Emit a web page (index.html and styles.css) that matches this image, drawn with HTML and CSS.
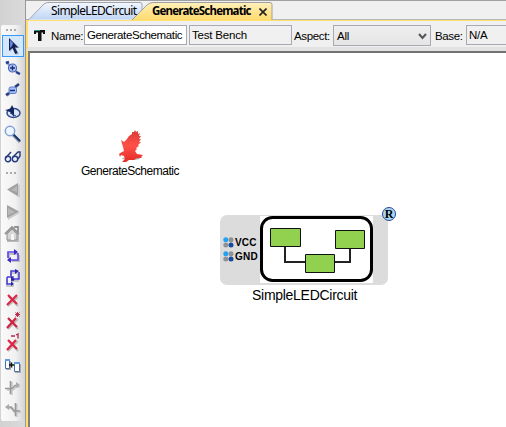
FILE: index.html
```html
<!DOCTYPE html>
<html lang="en">
<head>
<meta charset="utf-8">
<title>GenerateSchematic</title>
<link rel="stylesheet" href="styles.css">
</head>
<body>
<div class="app">
  <aside class="rail">
    <div class="tools">
      <div class="grip"><i></i><i></i><i></i></div>
      <div class="tool selected"><svg viewBox="0 0 20 22"><path d="M7 3v13l3-3 3 6 3-1-3-6h4z" fill="#8fa5c5" opacity=".6"/><path d="M6 2v13l3.500-3 2.700 6 2.500-1-2.800-5.500h3.500z" fill="#17204e"/><path d="M7 4v8l2-2 1-3z" fill="#6687e5"/></svg></div>
      <div class="tool"><svg viewBox="0 0 20 22"><path d="M3 5l13 12" stroke="#8495bf" stroke-width="2"/><path d="M3 6l3-1M13 15l4 2" fill="none" stroke="#273f91" stroke-width="2.500"/><circle cx="9.500" cy="11" r="4" fill="#bcd0fa" stroke="#4562b7" stroke-width="1.200"/><path d="M7 11h5M9.500 8.500v5" stroke="#172d80" stroke-width="1.500"/></svg></div>
      <div class="tool"><svg viewBox="0 0 20 22"><path d="M4 17L15 6" stroke="#8796b9" stroke-width="2"/><path d="M3 16l3-2M12 8l4-3" stroke="#293c7c" stroke-width="2.500"/><rect x="6" y="8" width="7.500" height="6.500" rx="2" fill="#a7c0f7" stroke="#5878c9"/><path d="M7 11.500h5" stroke="#132d83" stroke-width="1.500"/></svg></div>
      <div class="tool"><svg viewBox="0 0 20 22"><ellipse cx="10.500" cy="12" rx="6.500" ry="4.500" fill="#dce7fa" stroke="#334a91" stroke-width="1.500"/><path d="M2 9l5-1 2-4 2 4v8l-4-5z" fill="#14265f"/><path d="M7 12l6 3" stroke="#243e86"/></svg></div>
      <div class="tool"><svg viewBox="0 0 20 22"><path d="M10 12l7 7" stroke="#8c99ad" stroke-width="3"/><path d="M10 11l7 7" stroke="#19376c" stroke-width="2"/><circle cx="7" cy="8" r="4.700" fill="#eef7ff" stroke="#829fd4" stroke-width="1.500"/></svg></div>
      <div class="tool"><svg viewBox="0 0 20 22"><g fill="#e9f0ff" stroke="#253b79" stroke-width="1.400"><circle cx="5" cy="14" r="2.700"/><circle cx="12" cy="14" r="2.700"/><path d="M2.500 13L8 7M10 12l5-5 2 0v4l-2 3" fill="none"/></g></svg></div>
      <div class="grip second"><i></i><i></i><i></i></div>
      <div class="tool"><svg viewBox="0 0 20 22"><path d="M17 5v14L6 12z" fill="#ccc"/><path d="M15 4v13L4 10.500z" fill="#a0a0a0"/><path d="M14 7v6l-6-2z" fill="#b8b8b8"/></svg></div>
      <div class="tool"><svg viewBox="0 0 20 22"><path d="M5 6v13l12-7z" fill="#ccc"/><path d="M4 4v13l12-6.500z" fill="#a0a0a0"/><path d="M5 7v7l7-3z" fill="#b8b8b8"/></svg></div>
      <div class="tool"><svg viewBox="0 0 20 22"><path d="M4 11v8h12v-8" fill="#bbb"/><path d="M2 11l7-7 7 7M12 5V4h3v5" fill="none" stroke="#929292" stroke-width="1.800"/><path d="M4 11l5-5 5 5v6H4z" fill="#d5d5d5" stroke="#929292"/><path d="M8 11h3v6H8z" fill="#f5f5f5"/></svg></div>
      <div class="tool"><svg viewBox="0 0 20 22"><path d="M5 14V8h9M15 9v6H8" transform="translate(1 1)" fill="none" stroke="#bbb" stroke-width="2"/><path d="M5 13V7h8M15 8v7H8" fill="none" stroke="#5e4aec" stroke-width="1.700"/><path d="M11 4l4 3-4 3M8 12l-4 3 4 3" fill="#3d27c1"/></svg></div>
      <div class="tool"><svg viewBox="0 0 20 22"><path d="M3 11v7h7M7 9V5h7v8H8" transform="translate(1 1)" stroke="#bbb" stroke-width="1.500" fill="none"/><path d="M4 10v7h6M8 9V4h6M16 5v7h-5M4 10h6v4" fill="none" stroke="#4638da" stroke-width="1.500"/><path d="M12 2l4 2-4 3M8 9l4 4-4 1M8 14l3 3-3 2" fill="#2b269f"/></svg></div>
      <div class="tool"><svg viewBox="0 0 20 22"><path d="M6 8l9 9M15 8L5 17" stroke="#bbb" stroke-width="2"/><path d="M5 6l9 9M14 6L4 16" stroke="#dc2645" stroke-width="2.200"/></svg></div>
      <div class="tool"><svg viewBox="0 0 20 22"><path d="M6 8l9 10M15 8L5 18" stroke="#bbb" stroke-width="2"/><path d="M5 7l9 9M13 7L4 17" stroke="#cf2441" stroke-width="2.200"/><path d="M12 3.500h5M14.500 1v5M12.500 1.500l4 4M16.500 1.500l-4 4" stroke="#bd3150"/></svg></div>
      <div class="tool"><svg viewBox="0 0 20 22"><path d="M6 8l9 10M15 8L5 18" stroke="#bbb" stroke-width="2"/><path d="M5 7l9 9M13 7L4 17" stroke="#df2444" stroke-width="2.200"/><path d="M8 3h4M13 2l2-1v4.500" fill="none" stroke="#b52747" stroke-width="1.300"/></svg></div>
      <div class="tool"><svg viewBox="0 0 20 22"><path d="M3 6h5v9H3zM12 9h6v9h-6z" fill="#aaa"/><path d="M2.500 4.500h4v9h-4zM11.500 7.500h5v9h-5z" fill="#fff" stroke="#456ea2"/><path d="M2 5h5M11 8h6" stroke="#629cdc" stroke-width="2"/><path d="M6 10h5M8.500 7.500v5" stroke="#111" stroke-width="1.500"/></svg></div>
      <div class="tool"><svg viewBox="0 0 20 22"><path d="M8.500 5v13M4 12.500h6l3-3h4" fill="none" stroke="#ccc" stroke-width="2.500"/><path d="M7.500 4v13M2 11.500h7l3-3h4" fill="none" stroke="#9a9a9a" stroke-width="1.600"/><path d="M13 5l4 3-4 3" fill="#aaa"/></svg></div>
      <div class="tool"><svg viewBox="0 0 20 22"><path d="M13.500 5v13M5 9h4l3 4h6" fill="none" stroke="#ccc" stroke-width="2.500"/><path d="M12.500 4v13M3 8h5l3 4h6" fill="none" stroke="#9a9a9a" stroke-width="1.600"/><path d="M6 5L2 8l4 3" fill="#aaa"/></svg></div>
    </div>
  </aside>
  <main class="window">
    <nav class="tabs">
      <svg class="tabshapes" viewBox="0 0 481 20">
        <defs><linearGradient id="blue" x2="0" y2="1"><stop stop-color="#f3f7ff"/><stop offset="1" stop-color="#bfd5f5"/></linearGradient><linearGradient id="gold" x2="0" y2="1"><stop stop-color="#fff1bd"/><stop offset=".6" stop-color="#ffe38a"/><stop offset="1" stop-color="#ffdc70"/></linearGradient></defs>
        <path d="M0 19.500h4L19 4q2-1.500 5-1.500h91q2 0 2 2v15" fill="url(#blue)" stroke="#a0a5b0"/>
        <path d="M107 20L122 5q3-2.500 6-2.500h117q2 0 2 2V20" fill="url(#gold)" stroke="#a0a0a0"/>
        <path d="M247 19.500h234" stroke="#b8b8b8"/>
      </svg>
      <span class="tab first">SimpleLEDCircuit</span>
      <span class="tab active">GenerateSchematic</span>
      <svg class="close" viewBox="0 0 8 8"><path d="M.5.5l7 7M7.500.5l-7 7" stroke="#222" stroke-width="1.600"/></svg>
    </nav>
    <div class="form">
      <svg class="typeicon" viewBox="0 0 12 13"><path d="M1 1h10v4H9V3.500H7.500V12H4V3.500H2V5H0V2z" fill="#111"/><path d="M1 1h5v1H1z" fill="#1a9795"/></svg>
      <span class="label name">Name:</span><div class="field namebox">GenerateSchematic</div><div class="field kind">Test Bench</div>
      <span class="label aspect">Aspect:</span><div class="field select"><span>All</span><svg viewBox="0 0 9 7"><path d="M1 1l3.500 4L8 1" fill="none" stroke="#555" stroke-width="2"/></svg></div>
      <span class="label base">Base:</span><div class="field basebox">N/A</div>
    </div>
    <section class="canvas">
      <svg class="eagle" viewBox="0 0 26 32">
        <defs><linearGradient id="red" x2="0" y2="1"><stop stop-color="#d83a35"/><stop offset=".5" stop-color="#ff5148"/><stop offset="1" stop-color="#e52a24"/></linearGradient></defs>
        <ellipse cx="14" cy="28.500" rx="9" ry="1.500" fill="#aaa"/>
        <path d="M4 10l3 2 3-3 2-3 3-2 0-2 2 0 1-2 1 2 2-1 0 3 2-1-1 3 2 0-2 3 2 0-2 3 2 0-3 3 1 1-3 2 1 1-2 2 2 3 6 1-2 2 1 1-5 0-3 2-5 0-3 2-4 0 3-3-1-3-3-1-1 2-1-3 3-2 2-1-1-4z" fill="url(#red)"/>
      </svg>
      <div class="caption">GenerateSchematic</div>
      <div class="component">
        <div class="ports">
          <div class="port"><svg viewBox="0 0 11 11"><circle cx="2.800" cy="2.800" r="2.500" fill="#23a2f4"/><circle cx="8" cy="2.800" r="2.500" fill="#8e9298"/><circle cx="2.800" cy="8" r="2.500" fill="#8e9298"/><circle cx="8" cy="8" r="2.500" fill="#164ba1"/></svg><span>VCC</span></div>
          <div class="port"><svg viewBox="0 0 11 11"><circle cx="2.800" cy="2.800" r="2.500" fill="#23a2f4"/><circle cx="8" cy="2.800" r="2.500" fill="#8e9298"/><circle cx="2.800" cy="8" r="2.500" fill="#8e9298"/><circle cx="8" cy="8" r="2.500" fill="#164ba1"/></svg><span>GND</span></div>
        </div>
        <svg class="diagram" viewBox="0 0 113 67">
          <path d="M0 0h113v67H0z" fill="#fff"/><rect x="1.500" y="1.500" width="110" height="63" rx="11" fill="#fff" stroke="#000" stroke-width="3"/>
          <path d="M25 30v16h20M75 46h15V32" fill="none" stroke="#222" stroke-width="2"/>
          <g fill="#92d050" stroke="#111"><path d="M10.500 12.500h30v18h-30zM75.500 14.500h29v18h-29zM45.500 38.500h29v18h-29z"/></g>
        </svg>
      </div>
      <div class="reference">R</div>
      <div class="component-name">SimpleLEDCircuit</div>
    </section>
  </main>
</div>
</body>
</html>
```
FILE: styles.css
```css
* { box-sizing: border-box; }
body { margin: 0; overflow: hidden; background: #d8d8d8; color: #000; font-family: "Liberation Sans", sans-serif; }
svg { display: block; }
.app { display: grid; grid-template-columns: 25px 481px; width: 506px; height: 427px; }
.rail { padding: 25px 0 5px 1px; background: linear-gradient(90deg, #d2d2d2, #dadada); }
.tools { width: 24px; height: 396px; border-radius: 2px; background: linear-gradient(90deg, #fafafa, #f1f1f1 60%, #d3d3d3); }
.grip { display: flex; align-items: center; gap: 2px; height: 10px; padding-left: 5px; }
.grip i { width: 2px; height: 2px; background: #aaa; }
.grip.second { height: 12px; }
.tool { display: flex; height: 22px; padding-left: 2px; }
.tool svg { width: 20px; height: 22px; }
.tool.selected { width: 22px; margin-left: 1px; padding-left: 0; border: 1px solid #3399ff; background: #d5e7fa; }
.window { display: flex; flex-direction: column; min-width: 0; border-top: 1px solid #a0a0a0; border-left: 1px solid #989898; background: #f0f0f0; }
.tabs { display: flex; position: relative; flex: none; height: 19px; font: 12px/18px "Noto Sans", sans-serif; }
.tabshapes { position: absolute; top: -1px; left: -1px; width: 481px; height: 20px; }
.tab { position: relative; flex: none; white-space: nowrap; padding-top: 1px; letter-spacing: -.65px; }
.tab.first { width: 101px; padding-left: 25px; }
.tab.active { width: 108px; margin-left: 25px; font-size: 11.5px; font-weight: bold; letter-spacing: -.8px; }
.close { position: relative; width: 8px; height: 8px; margin: 7px 0 0 -1px; }
.form { display: flex; flex: none; height: 31px; padding: 4px 0 0 8px; border-top: 1px solid #ffe071; border-left: 2px solid #ffdc70; border-bottom: 4px solid #e2e2e2; font-size: 11.5px; white-space: nowrap; }
.form > * { flex: none; }
.typeicon { width: 12px; height: 13px; margin-top: 4px; margin-left: -2px; }
.label { padding-top: 4px; line-height: 14px; letter-spacing: -.35px; }
.name { width: 33px; margin-left: 5px; }
.field { height: 20px; padding: 2px; border: 1px solid #a7aab2; line-height: 14px; letter-spacing: -.2px; }
.namebox { width: 103px; background: #fff; letter-spacing: -.38px; }
.kind { width: 103px; margin-left: 2px; }
.aspect { width: 39px; margin-left: 2px; }
.select { display: flex; justify-content: space-between; width: 98px; height: 21px; padding: 3px 3px 0; background: linear-gradient(#efefef, #e5e5e5); }
.select svg { width: 9px; height: 7px; margin-top: 4px; }
.base { width: 30px; margin-left: 4px; }
.basebox { width: 50px; margin-left: 1px; }
.canvas { position: relative; flex: 1; border-top: 2px solid #737373; border-left: 2px solid #808080; margin-left: 2px; background: #fff; box-shadow: -2px 0 #ffdc70; }
.eagle { position: absolute; left: 87px; top: 77px; width: 26px; height: 32px; }
.caption { position: absolute; left: 51px; top: 111px; font-size: 12px; line-height: 14px; letter-spacing: -.47px; }
.component { position: absolute; display: flex; left: 190px; top: 162px; width: 168px; height: 70px; border-radius: 7px; background: #dcdcdc; }
.ports { width: 40px; padding: 22px 0 0 3px; }
.port { display: flex; height: 14px; gap: 1px; font: bold 10px/11px "Liberation Sans", sans-serif; letter-spacing: .2px; }
.port svg { width: 11px; height: 11px; flex: none; }
.diagram { width: 113px; height: 67px; margin-top: 1px; }
.reference { position: absolute; left: 352px; top: 154px; width: 14px; height: 14px; border: 1px solid #29459b; border-radius: 50%; background: #a9d7f0; font: bold 12px/12px "Liberation Serif", serif; text-align: center; }
.component-name { position: absolute; left: 222px; top: 234px; font-size: 14px; line-height: 16px; letter-spacing: -.28px; white-space: nowrap; }
```
